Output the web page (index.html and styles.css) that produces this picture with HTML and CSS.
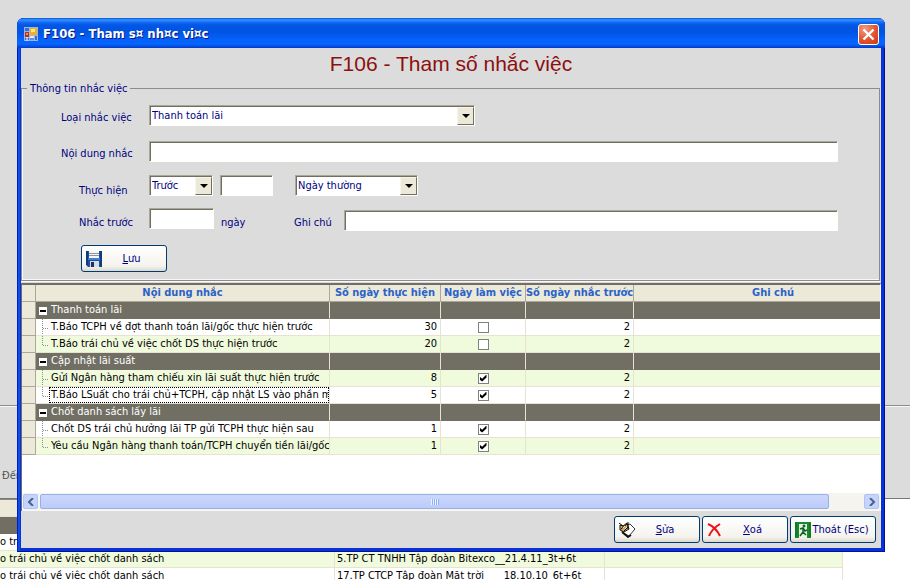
FILE: index.html
```html
<!DOCTYPE html>
<html lang="vi">
<head>
<meta charset="utf-8">
<title>F106 - Tham số nhắc việc</title>
<link rel="stylesheet" href="styles.css">
</head>
<body>
<main class="desktop">
  <div class="back-top"></div>
  <div class="back-filter">Đến</div>
  <table class="back-table">
    <colgroup><col class="b-name"><col class="b-bond"><col class="b-note"></colgroup>
    <thead><tr><th></th><th></th><th></th></tr></thead>
    <tbody>
      <tr class="group"><td></td><td></td><td></td></tr>
      <tr><td>o trái chủ về việc chốt danh sách</td><td></td><td></td></tr>
      <tr class="alt"><td>o trái chủ về việc chốt danh sách</td><td>5.TP CT TNHH Tập đoàn Bitexco__21.4.11_3t+6t</td><td></td></tr>
      <tr><td>o trái chủ về việc chốt danh sách</td><td>17.TP CTCP Tập đoàn Mặt trời____18.10.10_6t+6t</td><td></td></tr>
    </tbody>
  </table>

  <section class="window" role="dialog" aria-labelledby="caption">
    <header class="titlebar">
      <svg class="app-icon" width="14" height="14" viewBox="0 0 14 14" aria-hidden="true">
        <rect width="14" height="14" fill="#9fb4dc"/>
        <rect x="1" y="1" width="4" height="3" fill="#2f6fe0"/>
        <rect x="6" y="1" width="7" height="7" fill="#f2b01c"/><rect x="7" y="2" width="4" height="3" fill="#ffe88a"/>
        <rect x="1" y="5" width="4" height="5" fill="#c02a1a"/><rect x="2" y="6" width="2" height="2" fill="#f08a70"/>
        <rect x="6" y="9" width="4" height="2" fill="#dbe8ff"/><rect x="6" y="11" width="4" height="2" fill="#5c8fe8"/>
        <rect x="11" y="9" width="2" height="4" fill="#2f6fe0"/><rect x="1" y="11" width="4" height="2" fill="#2f6fe0"/>
        <path d="M3 10v4M8 10v1" stroke="#fff"/>
      </svg>
      <h1 id="caption">F106 - Tham s¤ nh¤c vi¤c</h1>
      <button class="close" aria-label="Đóng"><svg width="13" height="13" viewBox="0 0 13 13"><path d="M1.500 1.500l10 10M11.500 1.500l-10 10" stroke="#fff" stroke-width="2.400"/></svg></button>
    </header>

    <div class="client">
      <h2>F106 - Tham số nhắc việc</h2>
      <fieldset>
        <legend>Thông tin nhắc việc</legend>
        <div class="row row-type">
          <label for="type">Loại nhắc việc</label>
          <span class="combo combo-wide"><select id="type"><option>Thanh toán lãi</option></select><i></i></span>
        </div>
        <div class="row row-content">
          <label for="content">Nội dung nhắc</label>
          <input id="content" class="box grow" type="text">
        </div>
        <div class="row row-when">
          <label class="inner" for="when">Thực hiện</label>
          <span class="combo combo-small"><select id="when"><option>Trước</option></select><i></i></span>
          <input class="box days" type="text" aria-label="Số ngày">
          <span class="combo combo-mid"><select aria-label="Loại ngày"><option>Ngày thường</option></select><i></i></span>
        </div>
        <div class="row row-note">
          <label class="inner" for="before">Nhắc trước</label>
          <input id="before" class="box before" type="text">
          <span class="unit">ngày</span>
          <label class="note-label" for="note">Ghi chú</label>
          <input id="note" class="box grow" type="text">
        </div>
        <button class="btn save">
          <svg width="16" height="16" viewBox="0 0 16 16" aria-hidden="true">
            <path d="M0 0h16v16H2l-2-2z" fill="#1c4fa0"/><path d="M0 0h2v14H0zM14 0h2v16h-2z" fill="#123a80"/>
            <rect x="3" width="10" height="7" fill="#f4f6fa"/><path d="M3 2.500h10M3 4.500h10" stroke="#8c929c"/>
            <rect x="2" y="7" width="12" height="2" fill="#3f7fd8"/>
            <rect x="4" y="10" width="9" height="6" fill="#d5dce8"/><rect x="5" y="11" width="3" height="5" fill="#1b2f60"/>
          </svg>
          <span><u>L</u>ưu</span>
        </button>
      </fieldset>

      <div class="grid">
        <table>
          <colgroup><col class="c-mark"><col class="c-name"><col class="c-days"><col class="c-work"><col class="c-before"><col></colgroup>
          <thead>
            <tr><th></th><th><span>Nội dung nhắc</span></th><th><span>Số ngày thực hiện</span></th><th><span>Ngày làm việc</span></th><th><span>Số ngày nhắc trước</span></th><th><span>Ghi chú</span></th></tr>
          </thead>
          <tbody>
            <tr class="group"><th></th><td><button class="fold" aria-label="Thu gọn"></button>Thanh toán lãi</td><td></td><td></td><td></td><td></td></tr>
            <tr><th></th><td><i class="branch"></i><span class="name">T.Báo TCPH về đợt thanh toán lãi/gốc thực hiện trước</span></td><td class="num">30</td><td class="tick"><input type="checkbox" aria-label="Ngày làm việc"></td><td class="num">2</td><td></td></tr>
            <tr class="alt"><th></th><td><i class="branch last"></i><span class="name">T.Báo trái chủ về việc chốt DS thực hiện trước</span></td><td class="num">20</td><td class="tick"><input type="checkbox" aria-label="Ngày làm việc"></td><td class="num">2</td><td></td></tr>
            <tr class="group"><th></th><td><button class="fold" aria-label="Thu gọn"></button>Cập nhật lãi suất</td><td></td><td></td><td></td><td></td></tr>
            <tr class="alt"><th></th><td><i class="branch"></i><span class="name">Gửi Ngân hàng tham chiếu xin lãi suất thực hiện trước</span></td><td class="num">8</td><td class="tick"><input type="checkbox" checked aria-label="Ngày làm việc"></td><td class="num">2</td><td></td></tr>
            <tr><th></th><td><i class="branch last"></i><span class="name focus">T.Báo LSuất cho trái chủ+TCPH, cập nhật LS vào phần mề</span></td><td class="num">5</td><td class="tick"><input type="checkbox" checked aria-label="Ngày làm việc"></td><td class="num">2</td><td></td></tr>
            <tr class="group"><th></th><td><button class="fold" aria-label="Thu gọn"></button>Chốt danh sách lấy lãi</td><td></td><td></td><td></td><td></td></tr>
            <tr><th></th><td><i class="branch"></i><span class="name">Chốt DS trái chủ hưởng lãi TP gửi TCPH thực hiện sau</span></td><td class="num">1</td><td class="tick"><input type="checkbox" checked aria-label="Ngày làm việc"></td><td class="num">2</td><td></td></tr>
            <tr class="alt"><th></th><td><i class="branch last"></i><span class="name">Yêu cầu Ngân hàng thanh toán/TCPH chuyển tiền lãi/gốc l</span></td><td class="num">1</td><td class="tick"><input type="checkbox" checked aria-label="Ngày làm việc"></td><td class="num">2</td><td></td></tr>
          </tbody>
        </table>
        <div class="scroll">
          <button aria-label="Cuộn trái"><svg width="8" height="8" viewBox="0 0 8 8"><path d="M6 0L2 4l4 4" fill="none" stroke="#4d6185" stroke-width="2"/></svg></button>
          <div class="track"><div class="thumb"><i></i></div></div>
          <button aria-label="Cuộn phải"><svg width="8" height="8" viewBox="0 0 8 8"><path d="M2 0l4 4-4 4" fill="none" stroke="#4d6185" stroke-width="2"/></svg></button>
        </div>
      </div>

      <footer>
        <button class="btn">
          <svg width="17" height="16" viewBox="0 0 17 16" aria-hidden="true">
            <path d="M8 3l3-1 5 5-6 7-7-4z" fill="#fff" stroke="#333"/><path d="M3 10l6 5 3-2" fill="none" stroke="#111" stroke-width="1.800"/>
            <path d="M1 3l3 1 4-3 2 6-5 3-4-2z" fill="#c8a868" stroke="#111"/><path d="M0 1l4 3M2 7l6-5M5 9l4-4M9 0v7" stroke="#111"/>
            <path d="M4 6l2-2M6 7l2-2" stroke="#f8dca0"/>
          </svg>
          <span><u>S</u>ửa</span>
        </button>
        <button class="btn">
          <svg width="16" height="16" viewBox="0 0 16 16" aria-hidden="true"><path d="M1 2c5 2 9 6 12 12M13 2C8 5 4 9 2 14" fill="none" stroke="#f01018" stroke-width="2"/></svg>
          <span><u>X</u>oá</span>
        </button>
        <button class="btn">
          <svg width="16" height="16" viewBox="0 0 16 16" aria-hidden="true">
            <path d="M0 0h16v16h-4V2H4v14H0z" fill="#178a2c"/><path d="M4 2h8v12H4z" fill="#e4f4e4"/><path d="M1 1v14M15 1v14" stroke="#0c6a1e"/>
            <circle cx="9" cy="4" r="1.400" fill="#145c22"/><path d="M5 7l3-1 2 3 2-1M8 6v4l-3 4M8 10l3 3" fill="none" stroke="#145c22" stroke-width="1.500"/>
          </svg>
          <span>Thoát (Esc)</span>
        </button>
      </footer>
    </div>
  </section>
</main>
</body>
</html>
```
FILE: styles.css
```css
* { box-sizing: border-box; }

body {
  margin: 0;
  background: #fff;
  color: #000;
  font: 11px/16px "DejaVu Sans Condensed", "Noto Sans", sans-serif;
}

button, input, select { font: inherit; color: #000080; margin: 0; }

.desktop {
  position: relative;
  height: 100vh;
  overflow: hidden;
}

/* Parent screen behind the dialog */
.back-top {
  height: 406px;
  background: #dcdcdc;
  border-bottom: 1px solid #8c8c8c;
}
.back-filter {
  height: 93px;
  padding: 61px 0 0 2px;
  background: #dcdcdc;
  border-top: 1px solid #f8f8f8;
  border-bottom: 1px solid #777;
  color: #555;
}
table {
  border-collapse: separate;
  border-spacing: 0;
  table-layout: fixed;
}
.back-table { width: 843px; border-top: 1px solid #8c8a7c; }
.b-name { width: 335px; }
.b-bond { width: 270px; }

td, th {
  height: 17px;
  padding: 0;
  border-right: 1px solid #e8e2d0;
  border-bottom: 1px solid #e8e2d0;
  line-height: 16px;
  white-space: nowrap;
  overflow: hidden;
}
.back-table td { padding-left: 2px; }
.back-table td:first-child { padding-left: 0; }
th { background: #ece9d8; }
.alt td { background: #f0fadc; }
.group td {
  background: #716f64;
  color: #fff;
  border-bottom-color: #716f64;
}

/* Dialog frame */
.window {
  position: absolute;
  inset: 18px 25px 28px 17px;
  display: flex;
  flex-direction: column;
  padding: 0 4px 4px;
  background: #0831d9;
  box-shadow: inset 1px 0 #0019cf, inset -1px -1px #00138c, inset 3px 0 #0a50e8;
  border-radius: 7px 7px 0 0;
}
.titlebar {
  display: flex;
  align-items: center;
  flex: none;
  height: 30px;
  margin: 0 -4px;
  padding: 2px 6px 0 7px;
  border-radius: 7px 7px 0 0;
  background: linear-gradient(#0458e0 0, #3a93ff 2px, #1470f8 4px, #0456e4 7px, #0054e3 14px, #0562fb 22px, #0666ff 26px, #0446d8 29px, #0038c0);
}
.titlebar h1 {
  flex: 1;
  margin: 0 0 0 5px;
  color: #fff;
  font-size: 13px;
  font-weight: bold;
  text-shadow: 1px 1px #0a1883;
}
.close {
  display: grid;
  place-items: center;
  width: 21px;
  height: 21px;
  padding: 0;
  border: 1px solid #fff;
  border-radius: 3px;
  background: radial-gradient(circle at 30% 20%, #f09a80, #e25430 55%, #c83c10);
}
.client {
  display: flex;
  flex: 1;
  flex-direction: column;
  min-height: 0;
  background: #dcdcdc;
}
h2 {
  margin: 0;
  height: 34px;
  color: #8b1010;
  font: 21px/32px "Liberation Sans", Arial, sans-serif;
  text-align: center;
}

/* Form */
fieldset {
  min-width: 0;
  margin: 0 1px 2px 0;
  padding: 10px 0 8px;
  border: 1px solid #8c8c8c;
  box-shadow: inset 1px -1px #f8f8f8, 0 1px #f8f8f8;
  color: #000080;
}
legend { margin-left: 5px; padding: 0 3px; line-height: 13px; }
.row {
  display: flex;
  align-items: flex-end;
  margin-right: 41px;
}
.row > label { flex: none; width: 127px; padding-left: 39px; }
.row > label.inner { padding-left: 57px; }
.row-content { margin-top: 15px; }
.row-when { margin-top: 13px; }
.row-note { margin-top: 9px; }
.row-when .combo, .row-when .box { margin-bottom: 3px; }

.box, .combo {
  height: 21px;
  border: 1px solid #fffffa;
  border-top-color: #aca899;
  border-left-color: #aca899;
  border-radius: 0;
  background: #fff;
  box-shadow: inset 1px 1px #716f64;
}
.box { padding: 0 3px; }
.grow { flex: 1; min-width: 0; }
.combo { position: relative; display: block; flex: none; }
.combo select {
  display: block;
  width: 100%;
  height: 19px;
  padding: 1px 18px 0 2px;
  border: 0;
  background: none;
  appearance: none;
}
.combo i {
  position: absolute;
  top: 1px;
  right: 0;
  width: 17px;
  height: 18px;
  border: 1px solid #f8f6ea;
  border-right: 1px solid #716f64;
  border-bottom: 1px solid #716f64;
  background: #ece9d8;
  pointer-events: none;
}
.combo i::before {
  content: "";
  position: absolute;
  top: 6px;
  left: 4px;
  border: 4px solid transparent;
  border-top-color: #000;
  border-bottom: 0;
}
.combo-wide { width: 326px; }
.combo-small { width: 64px; }
.combo-mid { width: 123px; }
.days { width: 53px; margin: 0 22px 0 7px; }
.before { width: 65px; margin-bottom: 2px; }
.unit { width: 73px; margin-left: 7px; }
.row > .note-label { width: 50px; padding: 0; }

.btn {
  display: flex;
  align-items: center;
  width: 86px;
  height: 27px;
  padding: 0 5px 0 4px;
  border: 1px solid #003c74;
  border-radius: 3px;
  background: linear-gradient(#fff, #f4f3ee 80%, #dcd8cc);
}
.btn svg { flex: none; }
.btn span { flex: 1; text-align: center; white-space: nowrap; }
.save { margin: 14px 0 0 59px; }

/* Grid */
.grid {
  display: flex;
  flex: 1;
  flex-direction: column;
  justify-content: space-between;
  min-height: 0;
  overflow: hidden;
  border-top: 2px solid #716f64;
  border-left: 1px solid #716f64;
  border-right: 1px solid #fff;
  background: #fff;
}
.grid table { width: calc(100% + 33px); }
.c-mark { width: 14px; }
.c-name { width: 294px; }
.c-days { width: 111px; }
.c-work { width: 85px; }
.c-before { width: 108px; }
.grid th { border-color: #aca899; }
.grid thead th { color: #2a62c8; font-weight: bold; }
.grid thead span { display: flex; justify-content: center; }
.group td:nth-child(2) { padding-left: 15px; position: relative; }
.fold {
  position: absolute;
  top: 5px;
  left: 3px;
  width: 8px;
  height: 8px;
  padding: 0;
  border: 0;
  background: linear-gradient(#000, #000) center / 6px 2px no-repeat #fff;
}
.grid td:has(.branch) { position: relative; padding-left: 13px; }
.branch {
  position: absolute;
  top: 0;
  left: 6px;
  width: 6px;
  height: 17px;
  border-left: 1px dotted #909090;
}
.branch::after {
  content: "";
  display: block;
  height: 9px;
  border-bottom: 1px dotted #909090;
}
.branch.last { height: 9px; }
.name {
  display: block;
  height: 16px;
  padding-left: 2px;
  overflow: hidden;
}
.name.focus { outline: 1px dotted #000; outline-offset: -1px; }
.num { text-align: right; padding-right: 3px; }
.tick input {
  display: block;
  width: 11px;
  height: 11px;
  margin: 0 auto;
  border: 1px solid #808080;
  background: #fff;
  appearance: none;
}
.tick input:checked::before {
  content: "";
  display: block;
  width: 7px;
  height: 7px;
  margin: 1px;
  background: #000;
  clip-path: polygon(0 30%, 38% 62%, 100% 0, 100% 42%, 38% 100%, 0 70%);
}

.scroll {
  display: flex;
  flex: none;
  height: 18px;
  padding: 1px;
  border-bottom: 1px solid #f8f8f0;
  background: #f5f4ee;
}
.scroll button {
  display: grid;
  place-items: center;
  width: 15px;
  padding: 0;
  border: 1px solid #b0c4f4;
  border-radius: 2px;
  background: #c4d4fc;
}
.track { flex: 1; margin: 0 2px; }
.thumb {
  display: grid;
  place-items: center;
  width: 96%;
  height: 100%;
  border: 1px solid #98b0e8;
  border-radius: 2px;
  background: linear-gradient(#cad8ff, #bccbf8);
}
.thumb i {
  width: 8px;
  height: 6px;
  background: repeating-linear-gradient(90deg, #eef4fe 0 1px, #8cb0f8 1px 2px);
}

footer {
  display: flex;
  flex: none;
  justify-content: flex-end;
  gap: 2px;
  padding: 5px;
}
```
